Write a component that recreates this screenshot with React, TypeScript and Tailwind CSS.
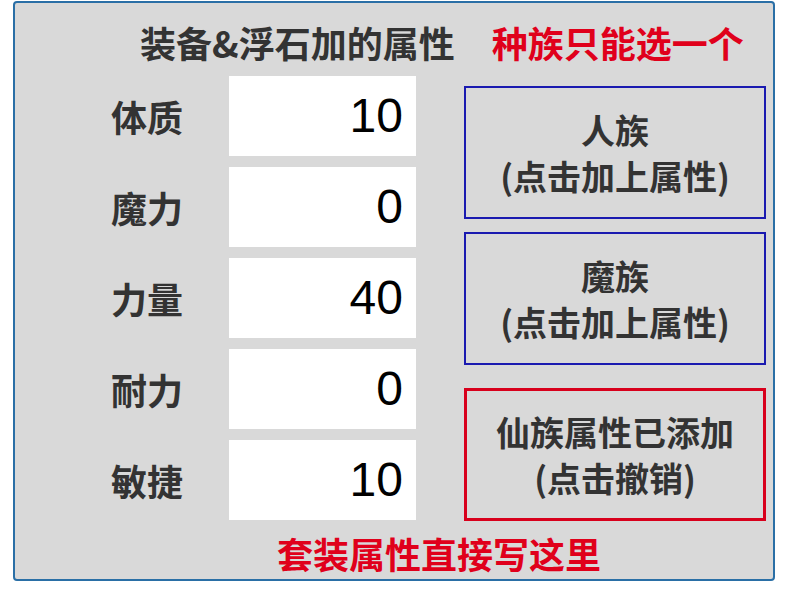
const stats = [
  { label: "体质", value: "10" },
  { label: "魔力", value: "0" },
  { label: "力量", value: "40" },
  { label: "耐力", value: "0" },
  { label: "敏捷", value: "10" },
];

const cjk = "font-['Noto_Sans_CJK_SC','Noto_Sans',sans-serif]";

function RaceButton({ title, hint, active }: { title: string; hint: string; active?: boolean }) {
  return (
    <button
      type="button"
      className={`flex h-[133px] w-[302px] flex-col items-center justify-center bg-transparent text-[34px] font-bold leading-[46px] text-[#333333] ${
        active ? "border-[3px] border-[#d8001c]" : "border-2 border-[#1a1ab0]"
      }`}
    >
      <span>{title}</span>
      <span>{hint}</span>
    </button>
  );
}

export default function App() {
  return (
    <div className={`min-h-[592px] w-[786px] bg-white pl-[13px] pt-[1px] ${cjk}`}>
      <div className="h-[580px] w-[762px] rounded-[4px] border-2 border-[#2a6fa6] bg-[#d9d9d9]">
        <div className="flex h-[73px] items-center pl-[125px] pt-1 text-[36px] font-bold">
          <span className="text-[#333333]">装备&amp;浮石加的属性</span>
          <span className="ml-[37px] text-[#e0001b]">种族只能选一个</span>
        </div>

        <div className="flex">
          <div className="flex flex-col gap-[11px] pl-[96px]">
            {stats.map((s) => (
              <div key={s.label} className="flex items-center">
                <span className="w-[118px] text-[36px] font-bold text-[#333333]">{s.label}</span>
                <div className="flex h-[80px] w-[187px] items-center justify-end bg-white pr-[13px] font-['Liberation_Sans',sans-serif] text-[48px] text-black">
                  {s.value}
                </div>
              </div>
            ))}
          </div>

          <div className="ml-[48px] mt-[10px] flex flex-col">
            <RaceButton title="人族" hint="(点击加上属性)" />
            <div className="mt-[13px]">
              <RaceButton title="魔族" hint="(点击加上属性)" />
            </div>
            <div className="mt-[23px]">
              <RaceButton title="仙族属性已添加" hint="(点击撤销)" active />
            </div>
          </div>
        </div>

        <div className="pl-[262px] pt-[12px] text-[36px] font-bold leading-[40px] text-[#e0001b]">
          套装属性直接写这里
        </div>
      </div>
    </div>
  );
}
